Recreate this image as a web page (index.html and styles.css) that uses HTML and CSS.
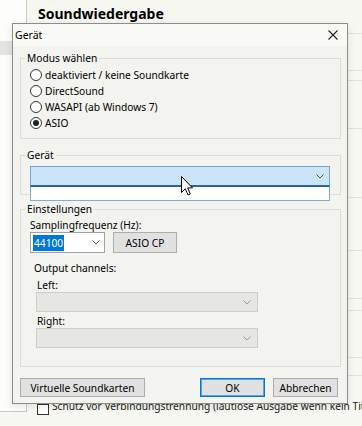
FILE: index.html
```html
<!DOCTYPE html>
<html lang="de">
<head>
    <meta charset="UTF-8">
    <title>Gerät</title>
    <link rel="stylesheet" href="styles.css">
</head>
<body>
    <div class="page">
        <aside class="nav">
            <div class="nav-item"></div>
        </aside>
        <main class="content">
            <h1>Soundwiedergabe</h1>
            <div class="rows">
                <div></div><div></div><div></div><div></div><div></div>
                <div></div><div></div><div></div><div></div><div></div>
            </div>
            <div class="check-row">
                <span class="checkbox"></span>
                <span class="check-text">Schutz vor Verbindungstrennung (lautlose Ausgabe wenn kein Titel läuft)</span>
            </div>
        </main>
    </div>

    <div class="dialog">
        <div class="titlebar">
            <span>Gerät</span>
            <svg class="close" width="10" height="10" viewBox="0 0 10 10">
                <path d="M0.5 0.5 L9.5 9.5 M9.5 0.5 L0.5 9.5" stroke="#222" stroke-width="1.1" fill="none"/>
            </svg>
        </div>

        <fieldset class="group group-mode">
            <legend>Modus wählen</legend>
            <div class="group-body">
                <div class="radio-row"><span class="radio"></span>deaktiviert / keine Soundkarte</div>
                <div class="radio-row"><span class="radio"></span>DirectSound</div>
                <div class="radio-row"><span class="radio"></span>WASAPI (ab Windows 7)</div>
                <div class="radio-row"><span class="radio checked"></span>ASIO</div>
            </div>
        </fieldset>

        <fieldset class="group group-device">
            <legend>Gerät</legend>
            <div class="group-body">
                <div class="combo combo-active">
                    <span></span>
                    <svg class="chev" width="8" height="5" viewBox="0 0 8 5"><path d="M0.5 0.5 L4 4 L7.5 0.5" stroke="#555" fill="none"/></svg>
                    <div class="combo-list"></div>
                </div>
            </div>
        </fieldset>

        <fieldset class="group group-settings">
            <legend>Einstellungen</legend>
            <div class="group-body">
                <div class="label">Samplingfrequenz (Hz):</div>
                <div class="sample-row">
                    <div class="combo combo-rate">
                        <span class="sel">44100</span>
                        <svg class="chev" width="8" height="5" viewBox="0 0 8 5"><path d="M0.5 0.5 L4 4 L7.5 0.5" stroke="#555" fill="none"/></svg>
                    </div>
                    <button class="btn btn-asio" type="button">ASIO CP</button>
                </div>
                <div class="label label-out">Output channels:</div>
                <div class="channels">
                    <div class="label label-ch">Left:</div>
                    <div class="combo combo-disabled">
                        <span></span>
                        <svg class="chev" width="8" height="5" viewBox="0 0 8 5"><path d="M0.5 0.5 L4 4 L7.5 0.5" stroke="#999" fill="none"/></svg>
                    </div>
                    <div class="label label-ch label-right">Right:</div>
                    <div class="combo combo-disabled">
                        <span></span>
                        <svg class="chev" width="8" height="5" viewBox="0 0 8 5"><path d="M0.5 0.5 L4 4 L7.5 0.5" stroke="#999" fill="none"/></svg>
                    </div>
                </div>
            </div>
        </fieldset>

        <div class="actions">
            <button class="btn btn-virtual" type="button">Virtuelle Soundkarten</button>
            <button class="btn btn-ok" type="button">OK</button>
            <button class="btn btn-cancel" type="button">Abbrechen</button>
        </div>
    </div>

    <svg class="cursor" width="12" height="20" viewBox="0 0 12 20">
        <path d="M0.5 0.5 V16.5 L4.3 12.8 L7 19 L9.3 18 L6.7 11.9 H11.5 Z" fill="#fff" stroke="#000" stroke-width="1" stroke-linejoin="miter"/>
    </svg>
</body>
</html>
```

FILE: styles.css
```css
* {
    box-sizing: border-box;
}
body {
    margin: 0;
    width: 362px;
    height: 426px;
    overflow: hidden;
    position: relative;
    background: #f8f8f3;
    color: #000;
    font: 10.2px "Noto Sans", sans-serif;
}

/* background page */
.page {
    display: flex;
    height: 426px;
}
.nav {
    flex-shrink: 0;
    width: 27px;
    height: 412px;
    padding-top: 41px;
    background: #fdfdfb;
    border-right: 1px solid #c9c9c6;
    border-bottom: 1px solid #c9c9c6;
}
.nav-item {
    height: 14px;
    background: #e4e4e2;
}
.content {
    flex: 1;
    min-width: 0;
    display: flex;
    flex-direction: column;
    padding-left: 11px;
}
h1 {
    margin: 5px 0 0;
    height: 18px;
    font-size: 14px;
    line-height: 18px;
    font-weight: 700;
}
.rows div {
    border-bottom: 1px solid #e1e1dc;
}
.rows div:nth-child(1) { height: 11px; }
.rows div:nth-child(2) { height: 37px; }
.rows div:nth-child(3) { height: 10px; }
.rows div:nth-child(4) { height: 48px; }
.rows div:nth-child(5) { height: 69px; }
.rows div:nth-child(6) { height: 53px; }
.rows div:nth-child(7) { height: 48px; }
.rows div:nth-child(8) { height: 12px; }
.rows div:nth-child(9) { height: 47px; }
.rows div:nth-child(10) { height: 18px; }
.check-row {
    margin: auto 0 13px -1px;
    height: 14px;
    display: flex;
    align-items: flex-end;
    gap: 3px;
    white-space: nowrap;
    color: #222;
    font-size: 10.2px;
    line-height: 14px;
}
.checkbox {
    flex-shrink: 0;
    width: 12px;
    height: 11px;
    margin-bottom: -2px;
    background: #fff;
    border: 1px solid #333;
}
.check-text {
    align-self: stretch;
}

/* dialog */
.dialog {
    position: absolute;
    left: 12px;
    top: 23px;
    width: 336px;
    height: 381px;
    background: #f3f3ef;
    border: 1px solid #8c8c8a;
    box-shadow: 0 2px 8px rgba(0, 0, 0, 0.1);
}
.titlebar {
    height: 22px;
    display: flex;
    align-items: center;
    justify-content: space-between;
    padding: 0 9px 0 2px;
    background: #f9f9f6;
    font-size: 10.5px;
}
.group {
    margin: 8px 6px 0 7px;
    padding: 0;
    min-width: 0;
    border: 1px solid #dcdcd8;
}
.group-mode {
    margin-top: 4px;
}
.group-settings {
    margin-top: 6px;
}
legend {
    margin-left: 4px;
    padding: 0 2px;
    line-height: 16px;
}
.group-mode .group-body {
    padding: 1px 0 7px 9px;
}
.radio-row {
    height: 16px;
    display: flex;
    align-items: center;
    gap: 3px;
}
.radio {
    width: 12px;
    height: 12px;
    display: grid;
    place-items: center;
    background: #fff;
    border: 1px solid #333;
    border-radius: 50%;
}
.radio.checked::after {
    content: "";
    width: 6px;
    height: 6px;
    border-radius: 50%;
    background: #222;
}
.group-device .group-body {
    padding: 3px 10px 7px 9px;
}
.group-settings .group-body {
    padding: 1px 9px 18px 9px;
}

.combo {
    height: 21px;
    display: flex;
    align-items: center;
    justify-content: space-between;
    padding: 0 5px 0 2px;
    background: #fff;
    border: 1px solid #a3a3a0;
}
.combo-active {
    position: relative;
    background: #cce4f7;
    border-color: #6fa8d2;
    border-bottom: 2px solid #2b6594;
}
.combo-list {
    position: absolute;
    left: -1px;
    right: -1px;
    top: 100%;
    margin-top: 2px;
    height: 14px;
    background: #fff;
    border: 1px solid #86aec6;
    border-top: none;
}
.combo-rate {
    width: 75px;
    padding-right: 4px;
}
.sel {
    padding: 0 1px;
    line-height: 16px;
    background: #0078d7;
    color: #fff;
}
.combo-disabled {
    width: 222px;
    height: 20px;
    padding-right: 6px;
    background: #e6e6e3;
    border-color: #cdcdca;
}

.label {
    height: 14px;
    line-height: 14px;
}
.sample-row {
    display: flex;
    gap: 8px;
}
.label-out {
    margin-top: 8px;
    padding-left: 4px;
}
.channels {
    padding-left: 6px;
}
.label-ch {
    margin-top: 3px;
    padding-left: 1px;
}
.label-right {
    margin-top: 2px;
}

.btn {
    height: 19px;
    padding: 0;
    font: inherit;
    color: #000;
    background: #e1e1e1;
    border: 1px solid #adadad;
}
.btn-asio {
    width: 64px;
    height: 21px;
}
.actions {
    display: flex;
    gap: 8px;
    margin: 11px 9px 0 7px;
}
.btn-virtual {
    width: 125px;
}
.btn-ok {
    width: 65px;
    margin-left: auto;
    border-color: #0078d7;
    box-shadow: inset 0 0 0 1px #5aa5e3;
}
.btn-cancel {
    width: 65px;
}

.cursor {
    position: absolute;
    left: 181px;
    top: 176px;
}
```
